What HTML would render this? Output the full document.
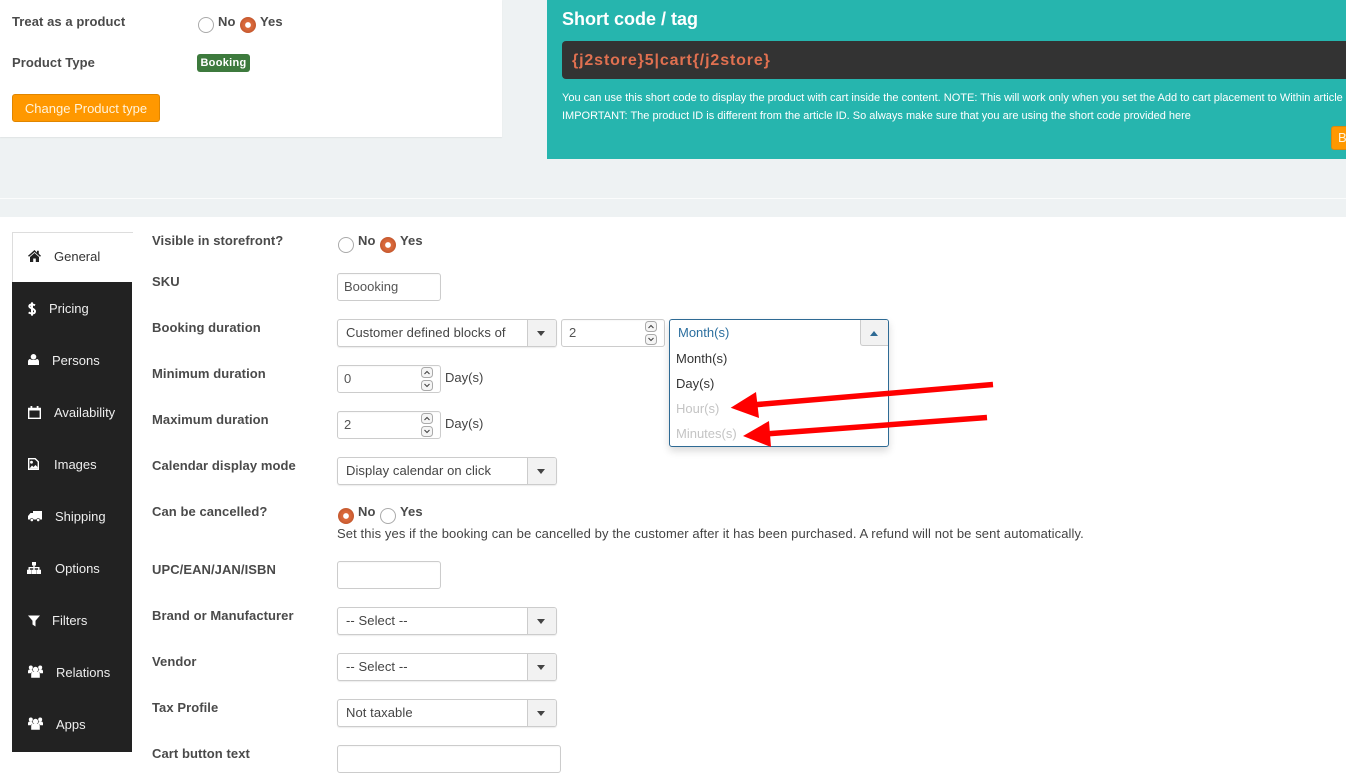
<!DOCTYPE html>
<html><head><meta charset="utf-8"><style>
html,body{margin:0;padding:0}
body{width:1346px;height:784px;overflow:hidden;position:relative;background:#fff;font-family:"Liberation Sans",sans-serif;font-size:13px;color:#444}
div,span,svg{position:absolute;box-sizing:border-box}
.t{white-space:nowrap;line-height:16px}
.b{font-weight:bold;color:#4a4a4a;letter-spacing:.07px}
.r{width:16px;height:16px;border-radius:50%;border:1px solid #aaa;background:#fff}
.r.on{border:none;background:radial-gradient(circle at 50% 50%,#fff 0 2.500px,#d9683a 3.200px 4.500px,#c4582e 8px)}
.in{border:1px solid #ccc;border-radius:3px;background:#fff;height:28px;line-height:26px;padding-left:6px;color:#555;box-shadow:inset 0 1px 1px rgba(0,0,0,.03)}
.sel{border:1px solid #ccc;border-radius:3px;background:#fff;height:28px;width:220px;line-height:26px;padding-left:8px;color:#444;box-shadow:0 1px 1px rgba(0,0,0,.08);white-space:nowrap;letter-spacing:.08px}
.sel i{position:absolute;right:0;top:0;width:28px;height:26px;background:#f2f2f2;border-left:1px solid #ccc;border-radius:0 2px 2px 0}
.sel i:after{content:"";position:absolute;left:9px;top:11px;border:4.500px solid transparent;border-top:5px solid #444;border-bottom:0}
.nav{left:12px;width:120px;height:52px;color:#eee;line-height:16px;white-space:nowrap}
.nav span{top:18px}
</style></head><body>
<div style="left:0;top:0;width:1346px;height:217px;background:#eef2f3"></div>
<div style="left:0;top:198px;width:1346px;height:1px;background:#fbfcfc"></div>
<div style="left:0;top:0;width:502px;height:137px;background:#fff;box-shadow:0 1px 1px rgba(0,0,0,.06)"></div>
<div class="t b" style="left:12px;top:14px">Treat as a product</div>
<div class="r" style="left:198px;top:17px"></div><div class="t b" style="left:218px;top:14px">No</div>
<div class="r on" style="left:240px;top:17px"></div><div class="t b" style="left:260px;top:14px">Yes</div>
<div class="t b" style="left:12px;top:55px">Product Type</div>
<div class="t" style="left:197px;top:54px;width:53px;height:18px;background:#3d7a3d;border-radius:3px;color:#fff;font-weight:bold;font-size:11px;line-height:18px;text-align:center;letter-spacing:.3px">Booking</div>
<div class="t" style="left:12px;top:94px;width:148px;height:28px;background:#ff9800;border:1px solid #e08600;border-radius:3px;color:#fff3dc;line-height:27px;text-align:center">Change Product type</div>

<div style="left:547px;top:0;width:799px;height:159px;background:#26b5ae"></div>
<div class="t" style="left:562px;top:9px;color:#fff;font-size:18px;font-weight:bold;line-height:20px">Short code / tag</div>
<div style="left:562px;top:41px;width:800px;height:38px;background:#333;border-radius:4px"></div>
<div class="t" style="left:572px;top:51px;color:#e07050;font-size:16px;font-weight:bold;line-height:20px;letter-spacing:.87px">{j2store}5|cart{/j2store}</div>
<div class="t" style="left:562px;top:90px;color:#fff;font-size:11px">You can use this short code to display the product with cart inside the content. NOTE: This will work only when you set the Add to cart placement to Within article using the</div>
<div class="t" style="left:562px;top:108px;color:#fff;font-size:11px">IMPORTANT: The product ID is different from the article ID. So always make sure that you are using the short code provided here</div>
<div class="t" style="left:1331px;top:126px;width:40px;height:24px;background:#ff9800;border:1px solid #d98a10;border-radius:3px;color:#fff3dc;line-height:22px;padding-left:6px">B</div>

<div style="left:12px;top:232px;width:121px;height:50px;background:#fff;border:1px solid #ddd;border-width:1px 0 0 1px"></div>
<div style="left:12px;top:282px;width:120px;height:470px;background:#222"></div>
<div class="nav" style="top:231px;color:#333"><svg width="13" height="12" viewBox="0 0 13 12" style="left:16px;top:19px"><path d="M6.500 0 0 5.800l1 1L6.500 2l5.500 4.800 1-1-2.200-2V.8H9v1.800zM2 7v5h3.200V8.500h2.600V12H11V7L6.500 3z" fill="#222"/></svg><span style="left:42px;top:18px">General</span></div>
<div class="nav" style="top:283px"><svg width="8" height="14" viewBox="0 0 8 14" style="left:16px;top:19px"><path d="M7 3.300C6.200 2.800 5 2.500 4 2.500 2.500 2.500 1.300 3.100 1.300 4.300 1.300 6.800 7 6 7 9.400 7 10.800 5.700 11.500 4 11.500c-1.200 0-2.500-.4-3.300-1.100M4 .4v13.200" fill="none" stroke="#fff" stroke-width="2"/></svg><span style="left:37px">Pricing</span></div>
<div class="nav" style="top:335px"><svg width="11" height="11" viewBox="0 0 11 11" style="left:16px;top:19px"><circle cx="5.500" cy="2.800" r="2.800" fill="#fff"/><path d="M0 11V7.500C0 6 1.200 5 2.200 5c1 1.400 5.600 1.400 6.600 0 1 0 2.200 1 2.200 2.500V11z" fill="#fff"/></svg><span style="left:40px">Persons</span></div>
<div class="nav" style="top:387px"><svg width="13" height="13" viewBox="0 0 13 13" style="left:16px;top:19px"><path d="M.7 2.500h11.600v9.800H.7z" fill="none" stroke="#fff" stroke-width="1.400"/><path d="M.7 3h11.600v1.500H.7zM2.500 0h1.800v3H2.500zM8.700 0h1.800v3H8.700z" fill="#fff"/></svg><span style="left:42px">Availability</span></div>
<div class="nav" style="top:439px"><svg width="11" height="12" viewBox="0 0 11 12" style="left:16px;top:19px"><path d="M.7.700h6.500l3.100 3.100v7.500H.7z" fill="none" stroke="#fff" stroke-width="1.400"/><path d="M1.500 10.500 4 7.500l1.500 1.500 2-2 2 2v1.500z" fill="#fff"/><circle cx="3.500" cy="4.200" r="1.400" fill="#fff"/></svg><span style="left:42px">Images</span></div>
<div class="nav" style="top:491px"><svg width="14" height="11" viewBox="0 0 14 11" style="left:16px;top:20px"><path d="M5 0h9v8.500h-2a1.800 1.800 0 0 0-3.500 0H5.500a1.800 1.800 0 0 0-3.500 0H0V5l2.500-3H5z" fill="#fff"/><circle cx="3.800" cy="9" r="1.300" fill="#fff"/><circle cx="10.200" cy="9" r="1.300" fill="#fff"/></svg><span style="left:43px">Shipping</span></div>
<div class="nav" style="top:543px"><svg width="14" height="12" viewBox="0 0 14 12" style="left:15px;top:19px"><path d="M5 0h4v3.500H5zM6.300 3.500h1.400V5h4.800v3h-1.400V6.300H7.700V8H6.300V6.300H2.900V8H1.500V5h4.800zM0 7.800h4.500V12H0zM4.800 7.800h4.400V12H4.800zM9.500 7.800H14V12H9.500z" fill="#fff"/></svg><span style="left:43px">Options</span></div>
<div class="nav" style="top:595px"><svg width="12" height="12" viewBox="0 0 12 12" style="left:16px;top:20px"><path d="M0 .5h12L7.500 5.800v5.700L4.500 9.500V5.800z" fill="#fff"/></svg><span style="left:40px">Filters</span></div>
<div class="nav" style="top:647px"><svg width="15" height="13" viewBox="0 0 15 13" style="left:16px;top:18px"><circle cx="7.500" cy="4.500" r="2.700" fill="#fff"/><circle cx="2.800" cy="2.500" r="2" fill="#fff"/><circle cx="12.200" cy="2.500" r="2" fill="#fff"/><path d="M3.200 12.800V9c0-1.500 1-2.300 2-2.300h4.600c1 0 2 .8 2 2.300v3.800zM0 8.200V6.300c0-1 .7-1.800 1.500-1.800h2.800c0 .8.300 1.500.8 2.100C3.800 7 3 7.500 2.800 8.200zM15 8.200V6.300c0-1-.7-1.800-1.500-1.800h-2.800c0 .8-.3 1.500-.8 2.100 1.300.4 2.100.9 2.300 1.600z" fill="#fff"/></svg><span style="left:44px">Relations</span></div>
<div class="nav" style="top:699px"><svg width="15" height="13" viewBox="0 0 15 13" style="left:16px;top:18px"><circle cx="7.500" cy="4.500" r="2.700" fill="#fff"/><circle cx="2.800" cy="2.500" r="2" fill="#fff"/><circle cx="12.200" cy="2.500" r="2" fill="#fff"/><path d="M3.200 12.800V9c0-1.500 1-2.300 2-2.300h4.600c1 0 2 .8 2 2.300v3.800zM0 8.200V6.300c0-1 .7-1.800 1.500-1.800h2.800c0 .8.300 1.500.8 2.100C3.800 7 3 7.500 2.800 8.200zM15 8.200V6.300c0-1-.7-1.800-1.500-1.800h-2.800c0 .8-.3 1.500-.8 2.100 1.300.4 2.100.9 2.300 1.600z" fill="#fff"/></svg><span style="left:44px">Apps</span></div>

<div class="t b" style="left:152px;top:233px">Visible in storefront?</div>
<div class="r" style="left:338px;top:237px"></div><div class="t b" style="left:358px;top:233px">No</div>
<div class="r on" style="left:380px;top:237px"></div><div class="t b" style="left:400px;top:233px">Yes</div>

<div class="t b" style="left:152px;top:274px">SKU</div>
<div class="in" style="left:337px;top:273px;width:104px">Boooking</div>

<div class="t b" style="left:152px;top:320px">Booking duration</div>
<div class="sel" style="left:337px;top:319px">Customer defined blocks of<i></i></div>
<div class="in" style="left:561px;top:319px;width:104px;padding-left:7px">2</div>

<div class="t b" style="left:152px;top:366px">Minimum duration</div>
<div class="in" style="left:337px;top:365px;width:104px">0</div>
<div class="t" style="left:445px;top:370px">Day(s)</div>

<div class="t b" style="left:152px;top:412px">Maximum duration</div>
<div class="in" style="left:337px;top:411px;width:104px">2</div>
<div class="t" style="left:445px;top:416px">Day(s)</div>

<svg width="1346" height="784" viewBox="0 0 1346 784" style="left:0;top:0" fill="#f5f5f5" stroke="#aaa">
<rect x="645.500" y="321.500" width="11" height="10" rx="3"/><rect x="645.500" y="334.500" width="11" height="10" rx="3"/>
<rect x="421.500" y="367.500" width="11" height="10" rx="3"/><rect x="421.500" y="380.500" width="11" height="10" rx="3"/>
<rect x="421.500" y="413.500" width="11" height="10" rx="3"/><rect x="421.500" y="426.500" width="11" height="10" rx="3"/>
<path d="M648.500 328l2.500-2.500 2.500 2.500M648.500 338l2.500 2.500 2.500-2.500M424.500 374l2.500-2.500 2.500 2.500M424.500 384l2.500 2.500 2.500-2.500M424.500 420l2.500-2.500 2.500 2.500M424.500 430l2.500 2.500 2.500-2.500" fill="none" stroke="#444" stroke-width="1.100"/>
</svg>

<div class="t b" style="left:152px;top:458px">Calendar display mode</div>
<div class="sel" style="left:337px;top:457px">Display calendar on click<i></i></div>

<div class="t b" style="left:152px;top:504px">Can be cancelled?</div>
<div class="r on" style="left:338px;top:508px"></div><div class="t b" style="left:358px;top:504px">No</div>
<div class="r" style="left:380px;top:508px"></div><div class="t b" style="left:400px;top:504px">Yes</div>
<div class="t" style="left:337px;top:526px;letter-spacing:.105px">Set this yes if the booking can be cancelled by the customer after it has been purchased. A refund will not be sent automatically.</div>

<div class="t b" style="left:152px;top:562px">UPC/EAN/JAN/ISBN</div>
<div class="in" style="left:337px;top:561px;width:104px"></div>
<div class="t b" style="left:152px;top:608px">Brand or Manufacturer</div>
<div class="sel" style="left:337px;top:607px">-- Select --<i></i></div>
<div class="t b" style="left:152px;top:654px">Vendor</div>
<div class="sel" style="left:337px;top:653px">-- Select --<i></i></div>
<div class="t b" style="left:152px;top:700px">Tax Profile</div>
<div class="sel" style="left:337px;top:699px">Not taxable<i></i></div>
<div class="t b" style="left:152px;top:746px">Cart button text</div>
<div class="in" style="left:337px;top:745px;width:224px"></div>

<div style="left:669px;top:319px;width:220px;height:128px;background:#fff;border:1px solid #2e6a94;border-radius:3px;box-shadow:0 4px 8px rgba(0,0,0,.15)"></div>
<div class="t" style="left:678px;top:325px;color:#2c6f9f">Month(s)</div>
<div style="left:860px;top:320px;width:28px;height:26px;background:#f2f2f2;border:1px solid #ccc;border-width:0 0 1px 1px;border-radius:0 2px 0 3px"></div>
<div style="left:870px;top:331px;border:4.500px solid transparent;border-bottom:5px solid #2e6a94;border-top:0"></div>
<div class="t" style="left:676px;top:351px;color:#333">Month(s)</div>
<div class="t" style="left:676px;top:376px;color:#333">Day(s)</div>
<div class="t" style="left:676px;top:401px;color:#c4c4c4">Hour(s)</div>
<div class="t" style="left:676px;top:426px;color:#c4c4c4">Minutes(s)</div>

<svg width="1346" height="784" style="left:0;top:0" viewBox="0 0 1346 784">
<path d="M993 384.500 752 405M987 417.500 765 434" stroke="#f00" stroke-width="5.500" fill="none"/>
<path d="M730.700 407.700 756 392 759 418zM743 436 769 421 771 447z" fill="#f00"/>
</svg>
</body></html>
